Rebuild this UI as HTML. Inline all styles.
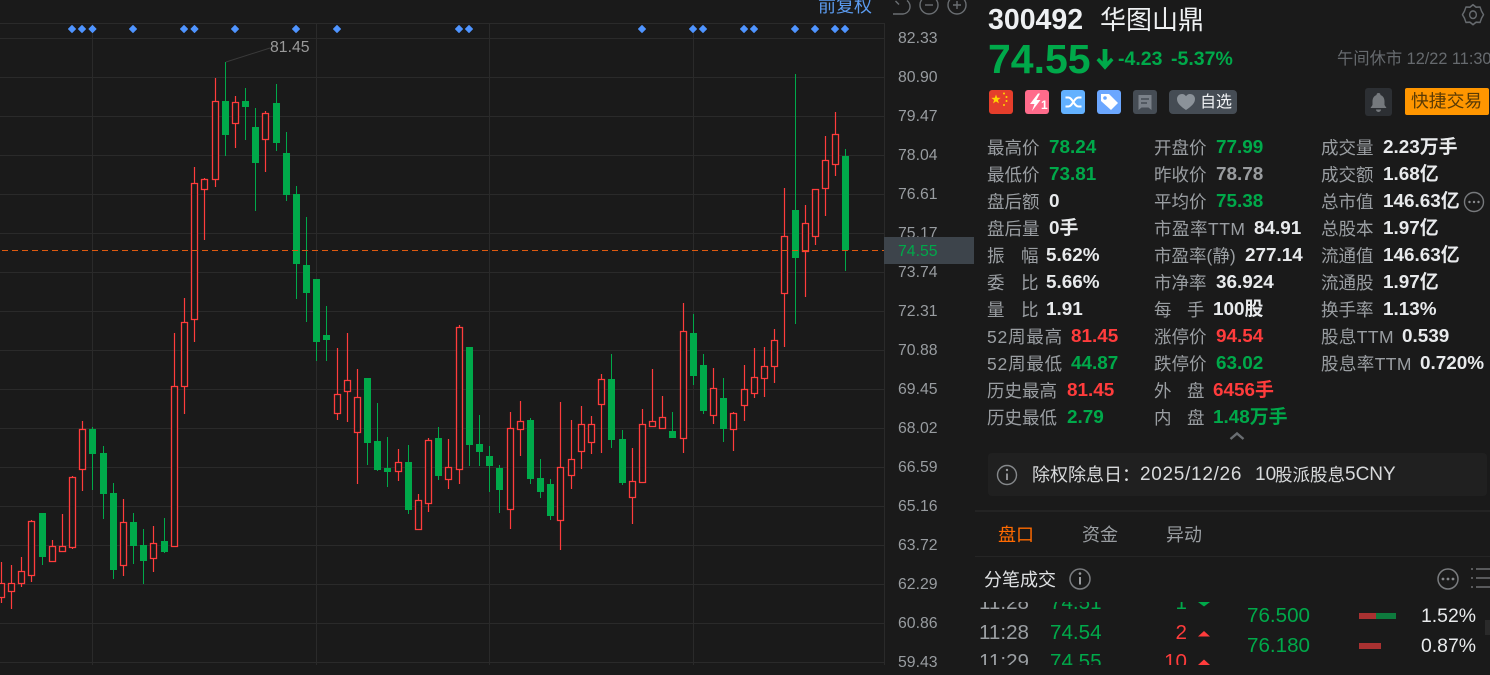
<!DOCTYPE html>
<html lang="zh">
<head>
<meta charset="utf-8">
<title>300492 华图山鼎</title>
<style>
html,body{margin:0;padding:0;background:#1a1a1a;}
body{width:1490px;height:665px;overflow:hidden;position:relative;font-family:"Liberation Sans","Noto Sans CJK SC",sans-serif;}
svg.bg{position:absolute;left:0;top:0;}
.t{position:absolute;white-space:nowrap;line-height:24px;height:24px;}
.a{font-size:15.8px;color:#989ca0;left:898px;}
.l{font-size:17.5px;color:#9a9ea2;}
.ls{letter-spacing:.8px;}
.v{font-size:18.9px;font-weight:bold;color:#e8eaec;}
.g{color:#00a94a;}
.d{color:#ff3c3c;}
.y{color:#999c9f;}
.r1{top:136px}.r2{top:163px}.r3{top:190px}.r4{top:217px}.r5{top:244px}.r6{top:271px}.r7{top:298px}.r8{top:325px}.r9{top:352px}.r10{top:379px}.r11{top:406px}
.n{font-size:20.6px;}
.w{font-size:19.4px;color:#e8eaec;}
.tm{font-size:20.6px;color:#9a9ea2;}
.b{color:#d8dadc;}
</style>
</head>
<body>
<svg class="bg" width="1490" height="665" viewBox="0 0 1490 665" xmlns="http://www.w3.org/2000/svg">
<rect width="1490" height="665" fill="#1a1a1a"/>
<!-- grid -->
<path stroke="#2a2a2a" stroke-width="1" fill="none" d="M0 23.5H884M0 38.5H884M0 77.5H884M0 116.5H884M0 155.5H884M0 194.5H884M0 233.5H884M0 272.5H884M0 311.5H884M0 350.5H884M0 389.5H884M0 428.5H884M0 467.5H884M0 506.5H884M0 545.5H884M0 584.5H884M0 623.5H884M0 662.5H884M92.5 23V665M316.5 23V665M489.5 23V665M693.5 23V665M884.5 23V665"/>
<!-- markers -->
<g fill="#4f94ff" stroke="#4f94ff" stroke-width="1" stroke-linejoin="round">
<path d="M72 25.500l3.500 3.500-3.500 3.500-3.500-3.500zM82 25.500l3.500 3.500-3.500 3.500-3.500-3.500zM92.500 25.500l3.500 3.500-3.500 3.500-3.500-3.500zM133 25.500l3.500 3.500-3.500 3.500-3.500-3.500zM184 25.500l3.500 3.500-3.500 3.500-3.500-3.500zM194.500 25.500l3.500 3.500-3.500 3.500-3.500-3.500zM235 25.500l3.500 3.500-3.500 3.500-3.500-3.500zM296 25.500l3.500 3.500-3.500 3.500-3.500-3.500zM337 25.500l3.500 3.500-3.500 3.500-3.500-3.500zM459 25.500l3.500 3.500-3.500 3.500-3.500-3.500zM469 25.500l3.500 3.500-3.500 3.500-3.500-3.500zM642 25.500l3.500 3.500-3.500 3.500-3.500-3.500zM693 25.500l3.500 3.500-3.500 3.500-3.500-3.500zM703 25.500l3.500 3.500-3.500 3.500-3.500-3.500zM744 25.500l3.500 3.500-3.500 3.500-3.500-3.500zM754 25.500l3.500 3.500-3.500 3.500-3.500-3.500zM795 25.500l3.500 3.500-3.500 3.500-3.500-3.500zM815 25.500l3.500 3.500-3.500 3.500-3.500-3.500zM835 25.500l3.500 3.500-3.500 3.500-3.500-3.500zM845 25.500l3.500 3.500-3.500 3.500-3.500-3.500z"/>
</g>
<path d="M226 62L270 48" stroke="#3a3a3a" stroke-width="1" fill="none"/>
<!-- red wicks -->
<path stroke="#ff3c3c" stroke-width="1.2" fill="none" d="M1.5 562V603M11.5 565V609M21.5 557V587M31.5 520V582M52.5 540V562M62.5 514V552M72.5 476V549M82.5 421V491M123.5 499V576M153.5 526V572M174.5 333V546M184.5 298V414M194.5 167V342M204.5 178V240M215.5 78V187M235.5 96V148M265.5 111V172M337.5 348V420M347.5 333V422M357.5 369V484M398.5 449V481M418.5 494V529M428.5 438V512M448.5 439V489M459.5 325V484M510.5 412V529M520.5 401V456M560.5 402V550M571.5 420V489M581.5 406V469M591.5 416V454M601.5 374V453M632.5 448V524M642.5 409V482M652.5 369V427M662.5 396V429M683.5 303V453M713.5 368V424M733.5 412V451M744.5 365V421M754.5 348V398M764.5 347V397M774.5 329V383M784.5 188V347M805.5 205V297M815.5 189V245M825.5 136V216M835.5 112V176"/>
<!-- red bodies -->
<path stroke="#ff3c3c" stroke-width="1.3" fill="#1a1a1a" d="M-1.5 583.5h6v14h-6zM8.5 583.5h6v8h-6zM18.5 571.5h6v12h-6zM28.5 521.5h6v54h-6zM49.5 546.5h6v15h-6zM59.5 546.5h6v5h-6zM69.5 477.5h6v70h-6zM79.5 429.5h6v40h-6zM120.5 522.5h6v43h-6zM150.5 543.5h6v15h-6zM171.5 386.5h6v160h-6zM181.5 322.5h6v64h-6zM191.5 183.5h6v136h-6zM201.5 179.5h6v10h-6zM212.5 101.5h6v78h-6zM232.5 102.5h6v21h-6zM262.5 113.5h6v26h-6zM334.5 394.5h6v19h-6zM344.5 380.5h6v11h-6zM354.5 397.5h6v35h-6zM395.5 462.5h6v9h-6zM415.5 500.5h6v29h-6zM425.5 440.5h6v63h-6zM445.5 467.5h6v12h-6zM456.5 327.5h6v142h-6zM507.5 428.5h6v81h-6zM517.5 421.5h6v8h-6zM557.5 467.5h6v53h-6zM568.5 459.5h6v16h-6zM578.5 424.5h6v27h-6zM588.5 424.5h6v18h-6zM598.5 379.5h6v25h-6zM629.5 481.5h6v16h-6zM639.5 424.5h6v58h-6zM649.5 421.5h6v5h-6zM659.5 417.5h6v11h-6zM680.5 331.5h6v107h-6zM710.5 388.5h6v27h-6zM730.5 413.5h6v16h-6zM741.5 389.5h6v16h-6zM751.5 377.5h6v16h-6zM761.5 366.5h6v12h-6zM771.5 340.5h6v26h-6zM781.5 236.5h6v57h-6zM802.5 223.5h6v28h-6zM812.5 189.5h6v47h-6zM822.5 160.5h6v28h-6zM832.5 134.5h6v30h-6z"/>
<!-- green wicks -->
<path stroke="#00a94a" stroke-width="1" fill="none" d="M42.5 513V565M92.5 427V490M103.5 446V519M113.5 483V579M133.5 513V564M143.5 529V584M164.5 518V553M225.5 62V156M245.5 88V140M255.5 108V211M276.5 84V151M286.5 132V201M296.5 186V299M306.5 217V322M316.5 279V361M326.5 306V361M367.5 378V465M377.5 403V471M387.5 437V487M408.5 445V514M438.5 427V480M469.5 347V466M479.5 415V466M489.5 446V492M499.5 465V513M530.5 418V484M540.5 459V498M550.5 479V520M611.5 354V448M622.5 430V485M672.5 412V438M693.5 314V385M703.5 354V414M723.5 378V442M795.5 74V324M845.5 149V271"/>
<!-- green bodies -->
<path fill="#00a94a" d="M39 513h7v44h-7zM89 429h7v25h-7zM100 453h7v41h-7zM110 493h7v77h-7zM130 522h7v24h-7zM140 545h7v16h-7zM161 541h7v11h-7zM222 101h7v34h-7zM242 101h7v6h-7zM252 127h7v36h-7zM273 103h7v40h-7zM283 153h7v42h-7zM293 194h7v70h-7zM303 265h7v28h-7zM313 279h7v63h-7zM323 335h7v5h-7zM364 378h7v65h-7zM374 441h7v29h-7zM384 468h7v4h-7zM405 462h7v48h-7zM435 438h7v38h-7zM466 347h7v98h-7zM476 444h7v8h-7zM486 456h7v10h-7zM496 468h7v22h-7zM527 420h7v59h-7zM537 478h7v14h-7zM547 484h7v32h-7zM608 379h7v61h-7zM619 439h7v44h-7zM669 431h7v7h-7zM690 333h7v43h-7zM700 365h7v46h-7zM720 398h7v31h-7zM792 210h7v48h-7zM842 156h7v94h-7z"/>
<!-- price line -->
<path d="M2 250.5H884" stroke="#dd5a10" stroke-width="1" stroke-dasharray="6 4" fill="none"/>
<rect x="884" y="237" width="90" height="27" fill="#3d444b"/>
<!-- top controls -->
<g fill="none" stroke="#6a6e72" stroke-width="1.4">
<path d="M893 14H903a7.5 7.5 0 0 0 4-13.5"/>
<path d="M895.5 1l3.5 3.5"/>
<circle cx="929" cy="5" r="9"/>
<path d="M925 5h8"/>
<circle cx="957" cy="5" r="9"/>
<path d="M953 5h8M957 1v8"/>
</g>
<!-- gear -->
<g fill="none" stroke="#666a6e" stroke-width="1.6" stroke-linejoin="round" transform="translate(1473 14.700) scale(.88 1) translate(-1473 -15)">
<path d="M1473 5l3.5 2.5 4.5-.2 1.7 4.2 2.3 3.5-2.3 3.5-1.7 4.2-4.5-.2-3.5 2.5-3.500-2.500-4.500.2-1.700-4.200-2.300-3.500 2.300-3.500 1.700-4.200 4.500.2z"/>
<circle cx="1473" cy="15" r="3.800"/>
</g>
<!-- down arrow -->
<path d="M1102.600 49h4.800v12.500l3.600-3.800 2.500 2.500-8.500 9.500-8.500-9.500 2.500-2.500 3.600 3.800z" fill="#00a94a"/>
<!-- icons -->
<rect x="989" y="90" width="24" height="24" rx="3" fill="#e53e2b"/>
<path d="M996 94.500l1.200 3.300 3.500.1-2.800 2.100 1 3.400-2.900-2-2.900 2 1-3.400-2.800-2.100 3.500-.1z" fill="#ffd400"/>
<g fill="#ffd400"><circle cx="1004" cy="93.500" r="1"/><circle cx="1006.500" cy="97" r="1"/><circle cx="1006.500" cy="101" r="1"/><circle cx="1004" cy="105" r="1"/></g>
<rect x="1025" y="90" width="24" height="24" rx="3" fill="#ff6b8b"/>
<path d="M1038 93.500l-8 10.500h4.500l-2.500 7 8.500-11h-4l3.500-6.500z" fill="#fff"/>
<rect x="1061" y="90" width="24" height="24" rx="3" fill="#62b1ff"/>
<path d="M1065.500 97.500h3c4 0 5.500 9 10 9h3M1065.500 106.500h3c4 0 5.500-9 10-9h3" fill="none" stroke="#fff" stroke-width="2"/>
<rect x="1097" y="90" width="24" height="24" rx="3" fill="#6ba7ff"/>
<path d="M1101 94h8l9 9-7 7-10-9z" fill="#fff"/>
<circle cx="1105" cy="98" r="1.800" fill="#6ba7ff"/>
<rect x="1133" y="90" width="24" height="24" rx="3" fill="#454c54"/>
<path d="M1138.500 95h13v15l-3-2.500h-7l-3 2.500z" fill="#7a8189"/>
<path d="M1141 99h8M1141 103h6" stroke="#454c54" stroke-width="1.500"/>
<rect x="1169" y="90" width="68" height="24" rx="4" fill="#454c54"/>
<path d="M1186 110c-5-3.500-9-6.500-9-11 0-3 2.300-5 5-5 1.800 0 3.200 1 4 2.300.8-1.300 2.200-2.300 4-2.300 2.700 0 5 2 5 5 0 4.500-4 7.500-9 11z" fill="#8b9299"/>
<rect x="1365" y="88" width="27" height="28" rx="3" fill="#2c2f33"/>
<path d="M1378.500 93a2 2 0 0 1 2 2c2.800 1 4 3.500 4 6.500v3.500l2 3h-16l2-3v-3.500c0-3 1.200-5.500 4-6.500a2 2 0 0 1 2-2zM1376 109.500h5a2.500 2.500 0 0 1-5 0z" fill="#75797d"/>
<rect x="1405" y="88" width="84" height="27" rx="2" fill="#ff9600"/>
<!-- more circle -->
<g fill="none" stroke="#77797c" stroke-width="1.400"><circle cx="1474" cy="202" r="9.500"/></g>
<g fill="#8a8c8f"><circle cx="1469.500" cy="202" r="1.200"/><circle cx="1474" cy="202" r="1.200"/><circle cx="1478.500" cy="202" r="1.200"/></g>
<!-- chevron -->
<path d="M1230.500 439l6.500-5.500 6.500 5.500" fill="none" stroke="#6a6e72" stroke-width="2.400"/>
<!-- banner -->
<rect x="988" y="453" width="499" height="43" rx="4" fill="#202020"/>
<g fill="none" stroke="#85888b" stroke-width="1.400"><circle cx="1007" cy="475" r="9.500"/></g>
<path d="M1007 473.500v6.500" stroke="#9a9c9f" stroke-width="1.800"/><circle cx="1007" cy="470" r="1.200" fill="#9a9c9f"/>
<!-- separators -->
<rect x="975" y="510" width="515" height="2" fill="#232323"/>
<rect x="975" y="556" width="515" height="1" fill="#252525"/>
<!-- sub title icons -->
<g fill="none" stroke="#7a7c7f" stroke-width="1.500"><circle cx="1080" cy="579" r="10"/><circle cx="1448" cy="579" r="10"/></g>
<path d="M1080 577v7.500" stroke="#9a9c9f" stroke-width="2"/><circle cx="1080" cy="573.500" r="1.300" fill="#9a9c9f"/>
<g fill="#85888b"><circle cx="1443" cy="579" r="1.400"/><circle cx="1448" cy="579" r="1.400"/><circle cx="1453" cy="579" r="1.400"/></g>
<path d="M1471 569h2M1476 569h14M1471 578h2M1476 578h14M1471 587h2M1476 587h14" stroke="#6e7073" stroke-width="1.400"/>
<!-- bars -->
<rect x="1359" y="613" width="17" height="6" fill="#a93131"/>
<rect x="1376" y="613" width="20" height="6" fill="#0e7a3d"/>
<rect x="1359" y="643" width="22" height="6" fill="#a93131"/>
<rect x="1485" y="620" width="5" height="15" fill="#2a2a2a"/>
</svg>

<!-- axis -->
<span class="t" style="left:270px;top:36px;font-size:15.8px;color:#9a9a9a;">81.45</span>
<span class="t" style="left:818px;top:-6px;font-size:18px;color:#5b9bf0;">前复权</span>
<span class="t a" style="top:27px">82.33</span>
<span class="t a" style="top:66px">80.90</span>
<span class="t a" style="top:105px">79.47</span>
<span class="t a" style="top:144px">78.04</span>
<span class="t a" style="top:183px">76.61</span>
<span class="t a" style="top:222px;height:15px;overflow:hidden">75.17</span>
<span class="t a g" style="top:240px;color:#00a94a">74.55</span>
<span class="t a" style="top:261px">73.74</span>
<span class="t a" style="top:300px">72.31</span>
<span class="t a" style="top:339px">70.88</span>
<span class="t a" style="top:378px">69.45</span>
<span class="t a" style="top:417px">68.02</span>
<span class="t a" style="top:456px">66.59</span>
<span class="t a" style="top:495px">65.16</span>
<span class="t a" style="top:534px">63.72</span>
<span class="t a" style="top:573px">62.29</span>
<span class="t a" style="top:612px">60.86</span>
<span class="t a" style="top:651px">59.43</span>

<!-- header -->
<span class="t" style="left:988px;top:8px;font-size:28.5px;font-weight:bold;color:#eef0f2;">300492</span>
<span class="t" style="left:1100px;top:8px;font-size:26px;color:#eef0f2;">华图山鼎</span>
<span class="t" style="left:988px;top:47px;font-size:41px;font-weight:bold;color:#00a94a;">74.55</span>
<span class="t v g" style="left:1118px;top:47px;font-size:19.5px;">-4.23</span>
<span class="t v g" style="left:1171px;top:47px;font-size:19.5px;">-5.37%</span>
<span class="t" style="left:1337px;top:47px;font-size:16.3px;color:#666a6e;">午间休市 12/22 11:30</span>
<span class="t" style="left:1041px;top:96px;font-size:12px;font-weight:bold;color:#fff;line-height:18px;">1</span>
<span class="t" style="left:1200px;top:91px;font-size:16px;color:#eef0f2;">自选</span>
<span class="t" style="left:1411px;top:89px;font-size:17.800px;color:#5a3b05;">快捷交易</span>

<!-- col 1 -->
<span class="t l r1" style="left:987px">最高价</span><span class="t v g r1" style="left:1049px">78.24</span>
<span class="t l r2" style="left:987px">最低价</span><span class="t v g r2" style="left:1049px">73.81</span>
<span class="t l r3" style="left:987px">盘后额</span><span class="t v r3" style="left:1049px">0</span>
<span class="t l r4" style="left:987px">盘后量</span><span class="t v r4" style="left:1049px">0手</span>
<span class="t l r5" style="left:987px">振</span><span class="t l r5" style="left:1021px">幅</span><span class="t v r5" style="left:1046px">5.62%</span>
<span class="t l r6" style="left:987px">委</span><span class="t l r6" style="left:1021px">比</span><span class="t v r6" style="left:1046px">5.66%</span>
<span class="t l r7" style="left:987px">量</span><span class="t l r7" style="left:1021px">比</span><span class="t v r7" style="left:1046px">1.91</span>
<span class="t l ls r8" style="left:987px">52周最高</span><span class="t v d r8" style="left:1071px">81.45</span>
<span class="t l ls r9" style="left:987px">52周最低</span><span class="t v g r9" style="left:1071px">44.87</span>
<span class="t l r10" style="left:987px">历史最高</span><span class="t v d r10" style="left:1067px">81.45</span>
<span class="t l r11" style="left:987px">历史最低</span><span class="t v g r11" style="left:1067px">2.79</span>

<!-- col 2 -->
<span class="t l r1" style="left:1154px">开盘价</span><span class="t v g r1" style="left:1216px">77.99</span>
<span class="t l r2" style="left:1154px">昨收价</span><span class="t v y r2" style="left:1216px">78.78</span>
<span class="t l r3" style="left:1154px">平均价</span><span class="t v g r3" style="left:1216px">75.38</span>
<span class="t l ls r4" style="left:1154px;letter-spacing:.5px">市盈率TTM</span><span class="t v r4" style="left:1254px">84.91</span>
<span class="t l r5" style="left:1154px">市盈率(静)</span><span class="t v r5" style="left:1245px">277.14</span>
<span class="t l r6" style="left:1154px">市净率</span><span class="t v r6" style="left:1216px">36.924</span>
<span class="t l r7" style="left:1154px">每</span><span class="t l r7" style="left:1187px">手</span><span class="t v r7" style="left:1213px">100股</span>
<span class="t l r8" style="left:1154px">涨停价</span><span class="t v d r8" style="left:1216px">94.54</span>
<span class="t l r9" style="left:1154px">跌停价</span><span class="t v g r9" style="left:1216px">63.02</span>
<span class="t l r10" style="left:1154px">外</span><span class="t l r10" style="left:1187px">盘</span><span class="t v d r10" style="left:1213px">6456手</span>
<span class="t l r11" style="left:1154px">内</span><span class="t l r11" style="left:1187px">盘</span><span class="t v g r11" style="left:1213px">1.48万手</span>

<!-- col 3 -->
<span class="t l r1" style="left:1321px">成交量</span><span class="t v r1" style="left:1383px">2.23万手</span>
<span class="t l r2" style="left:1321px">成交额</span><span class="t v r2" style="left:1383px">1.68亿</span>
<span class="t l r3" style="left:1321px">总市值</span><span class="t v r3" style="left:1383px">146.63亿</span>
<span class="t l r4" style="left:1321px">总股本</span><span class="t v r4" style="left:1383px">1.97亿</span>
<span class="t l r5" style="left:1321px">流通值</span><span class="t v r5" style="left:1383px">146.63亿</span>
<span class="t l r6" style="left:1321px">流通股</span><span class="t v r6" style="left:1383px">1.97亿</span>
<span class="t l r7" style="left:1321px">换手率</span><span class="t v r7" style="left:1383px">1.13%</span>
<span class="t l ls r8" style="left:1321px;letter-spacing:.4px">股息TTM</span><span class="t v r8" style="left:1402px">0.539</span>
<span class="t l ls r9" style="left:1321px;letter-spacing:.4px">股息率TTM</span><span class="t v r9" style="left:1420px">0.720%</span>

<!-- banner -->
<span class="t b" style="left:1032px;top:463px;font-size:18px;">除权除息日：</span>
<span class="t b" style="left:1140px;top:463px;font-size:19px;letter-spacing:.7px;">2025/12/26</span>
<span class="t b" style="left:1255px;top:463px;font-size:19px;">10</span>
<span class="t b" style="left:1275px;top:463px;font-size:17.500px;">股派股息</span>
<span class="t b" style="left:1345px;top:463px;font-size:19px;">5CNY</span>

<!-- tabs -->
<span class="t" style="left:998px;top:523px;font-size:18px;color:#ff6a00;">盘口</span>
<span class="t" style="left:1082px;top:523px;font-size:18px;color:#9a9ea2;">资金</span>
<span class="t" style="left:1166px;top:523px;font-size:18px;color:#9a9ea2;">异动</span>
<span class="t" style="left:984px;top:568px;font-size:18px;color:#dfe1e3;">分笔成交</span>

<!-- ticks -->
<div style="position:absolute;left:975px;top:602px;width:260px;height:63px;overflow:hidden;">
<span class="t tm" style="left:4px;top:-11px">11:28</span><span class="t n g" style="left:75px;top:-11px">74.51</span><span class="t n g" style="right:48px;top:-11px">1</span>
<span class="t tm" style="left:4px;top:19px">11:28</span><span class="t n g" style="left:75px;top:19px">74.54</span><span class="t n d" style="right:48px;top:19px">2</span>
<span class="t tm" style="left:4px;top:48px">11:29</span><span class="t n g" style="left:75px;top:48px">74.55</span><span class="t n d" style="right:48px;top:48px">10</span>
<svg width="260" height="63" style="position:absolute;left:0;top:0"><path d="M223 0h12l-6 4.500z" fill="#00a94a"/><path d="M223 34.500l6-5.500 6 5.500z" fill="#ff3c3c"/><path d="M223 63l6-5.500 6 5.500z" fill="#ff3c3c"/></svg>
</div>

<span class="t n g" style="left:1247px;top:604px">76.500</span>
<span class="t n g" style="left:1247px;top:634px">76.180</span>
<span class="t w" style="left:1421px;top:604px">1.52%</span>
<span class="t w" style="left:1421px;top:634px">0.87%</span>
</body>
</html>
